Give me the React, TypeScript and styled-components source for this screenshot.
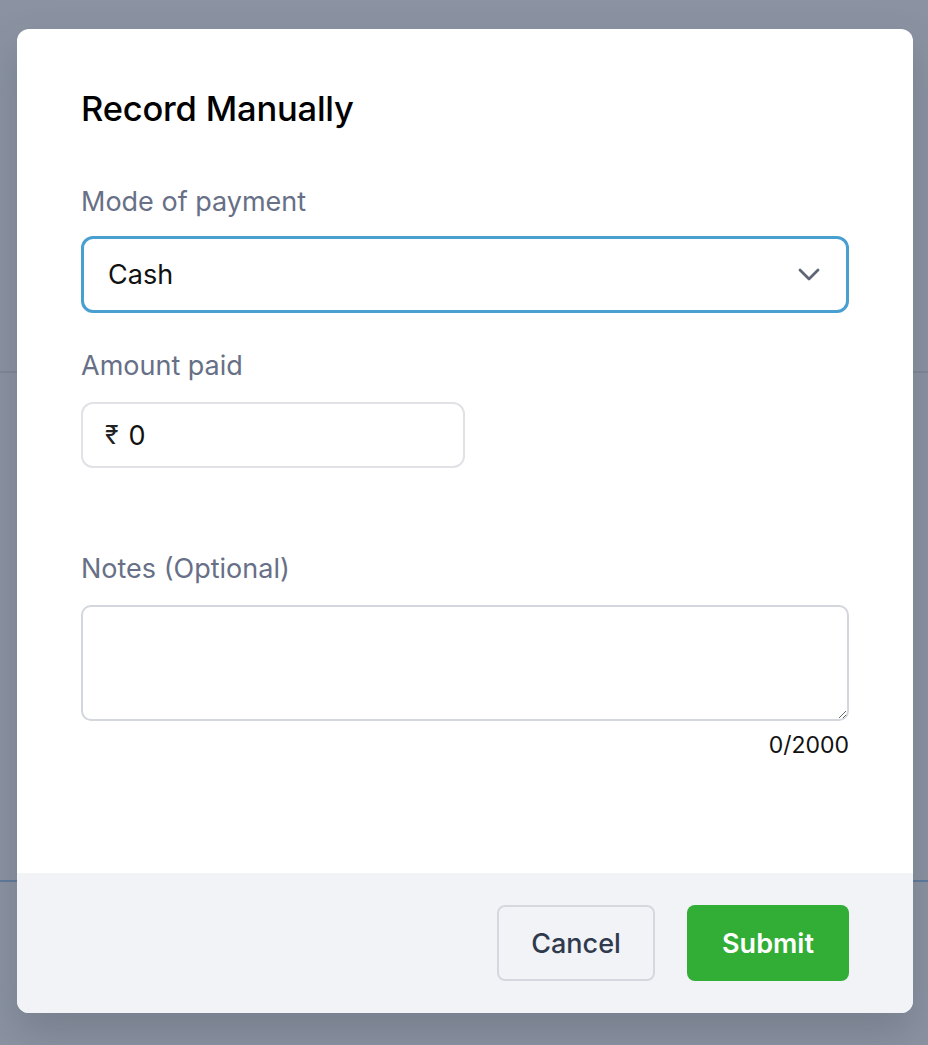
import React from "react";
import styled, { createGlobalStyle } from "styled-components";

const GlobalStyle = createGlobalStyle`
  html, body {
    margin: 0;
    padding: 0;
    background: #8b93a2;
    font-family: Inter, "Noto Sans", "Liberation Sans", sans-serif;
  }
  * { box-sizing: border-box; }
`;

const Backdrop = styled.div`
  min-height: 1045px;
  padding: 29px 15px 32px 17px;
  background:
    linear-gradient(to bottom, transparent 371px, rgba(120,128,142,0.6) 371px, rgba(120,128,142,0.6) 373px, transparent 373px),
    linear-gradient(to bottom, transparent 880px, #5f7a9c 880px, #5f7a9c 882px, transparent 882px),
    #8b93a2;
`;

const Modal = styled.div`
  width: 896px;
  height: 984px;
  background: #ffffff;
  border-radius: 12px;
  overflow: hidden;
  display: flex;
  flex-direction: column;
  box-shadow: 0 20px 40px rgba(60, 66, 80, 0.25);
`;

const Body = styled.div`
  flex: 1;
  padding: 60px 64px 0 64px;
  display: flex;
  flex-direction: column;
`;

const Title = styled.h2`
  margin: 0 0 56px 0;
  font-size: 34.5px;
  line-height: 40px;
  font-weight: 500;
  color: #000;
  letter-spacing: -0.2px;
`;

const Label = styled.label<{ $top?: number; $bottom?: number }>`
  display: block;
  margin: ${(p) => p.$top ?? 0}px 0 ${(p) => p.$bottom ?? 19}px 0;
  font-size: 27px;
  line-height: 34px;
  font-weight: 400;
  color: #677086;
`;

const SelectBox = styled.div`
  height: 77px;
  border: 3px solid #4a9fd1;
  border-radius: 12px;
  display: flex;
  align-items: center;
  justify-content: space-between;
  padding: 0 26px 0 24px;
  font-size: 27px;
  color: #111;
`;

const Chevron = styled.svg`
  width: 22px;
  height: 14px;
  color: #5f6675;
`;

const AmountBox = styled.div`
  width: 384px;
  height: 66px;
  border: 2px solid #e1e2e6;
  border-radius: 12px;
  display: flex;
  align-items: center;
  gap: 10px;
  padding: 0 22px;
  font-size: 27px;
  color: #111;
`;

const Rupee = styled.span`
  font-size: 25px;
  color: #222;
`;

const NotesArea = styled.textarea`
  display: block;
  width: 768px;
  height: 116px;
  border: 2px solid #d3d6dc;
  border-radius: 10px;
  resize: vertical;
  padding: 12px 20px;
  font-family: inherit;
  font-size: 24px;
  outline: none;
`;

const Counter = styled.div`
  margin-top: 10px;
  text-align: right;
  font-size: 23px;
  line-height: 28px;
  color: #111;
`;

const Footer = styled.div`
  height: 140px;
  background: #f2f3f7;
  display: flex;
  align-items: center;
  justify-content: flex-end;
  gap: 32px;
  padding: 0 64px;
`;

const Button = styled.button<{ $primary?: boolean }>`
  height: 76px;
  border-radius: 8px;
  font-family: inherit;
  font-size: 27px;
  cursor: pointer;
  ${(p) =>
    p.$primary
      ? `
    width: 162px;
    background: #32ad35;
    border: none;
    color: #fff;
    font-weight: 600;
  `
      : `
    width: 158px;
    background: #f2f3f7;
    border: 2px solid #d5d8de;
    color: #2f3a4d;
    font-weight: 500;
  `}
`;

export default function App() {
  return (
    <>
      <GlobalStyle />
      <Backdrop>
        <Modal>
          <Body>
            <Title>Record Manually</Title>
            <Label $bottom={17}>Mode of payment</Label>
            <SelectBox>
              <span>Cash</span>
              <Chevron viewBox="0 0 22 14" fill="none">
                <path d="M2 2 L11 11 L20 2" stroke="currentColor" strokeWidth="2.8" strokeLinecap="round" strokeLinejoin="round" />
              </Chevron>
            </SelectBox>
            <Label $top={36}>Amount paid</Label>
            <AmountBox>
              <Rupee>₹</Rupee>
              <span>0</span>
            </AmountBox>
            <Label $top={84}>Notes (Optional)</Label>
            <NotesArea />
            <Counter>0/2000</Counter>
          </Body>
          <Footer>
            <Button>Cancel</Button>
            <Button $primary>Submit</Button>
          </Footer>
        </Modal>
      </Backdrop>
    </>
  );
}
